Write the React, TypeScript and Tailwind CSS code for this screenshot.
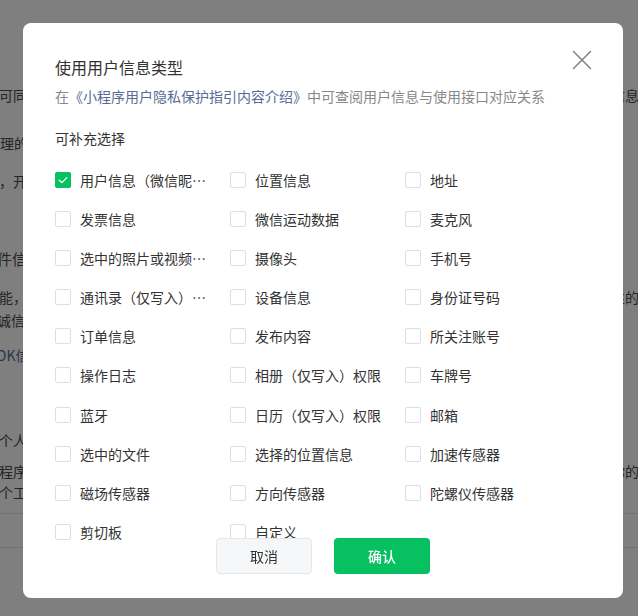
import React from "react";

const items: { label: string; checked?: boolean }[] = [
  { label: "用户信息（微信昵称、头像）", checked: true },
  { label: "位置信息" },
  { label: "地址" },
  { label: "发票信息" },
  { label: "微信运动数据" },
  { label: "麦克风" },
  { label: "选中的照片或视频信息" },
  { label: "摄像头" },
  { label: "手机号" },
  { label: "通讯录（仅写入）权限" },
  { label: "设备信息" },
  { label: "身份证号码" },
  { label: "订单信息" },
  { label: "发布内容" },
  { label: "所关注账号" },
  { label: "操作日志" },
  { label: "相册（仅写入）权限" },
  { label: "车牌号" },
  { label: "蓝牙" },
  { label: "日历（仅写入）权限" },
  { label: "邮箱" },
  { label: "选中的文件" },
  { label: "选择的位置信息" },
  { label: "加速传感器" },
  { label: "磁场传感器" },
  { label: "方向传感器" },
  { label: "陀螺仪传感器" },
  { label: "剪切板" },
  { label: "自定义" },
];

function Checkbox({ checked }: { checked?: boolean }) {
  if (checked) {
    return (
      <span className="flex h-4 w-4 shrink-0 items-center justify-center rounded-[2px] bg-[#07c160]">
        <svg width="12" height="12" viewBox="0 0 12 12" fill="none">
          <path d="M2.2 6.2 L4.9 8.6 L9.8 3.6" stroke="#fff" strokeWidth="1.3" strokeLinecap="round" strokeLinejoin="round" />
        </svg>
      </span>
    );
  }
  return <span className="block h-4 w-4 shrink-0 rounded-[2px] border border-[#dedede] bg-white" />;
}

export default function App() {
  const font = { fontFamily: '"Noto Sans CJK SC", "Noto Sans", sans-serif' };
  return (
    <div className="relative h-[616px] w-[638px] overflow-hidden bg-white text-[14px] text-[#4a4a4a]" style={font}>
      {/* background page */}
      <div className="flex flex-col">
        <div className="mt-[84px] flex h-[22px] justify-between leading-[22px]">
          <span className="-ml-[1px]">可同意相关条款</span>
          <span className="-mr-[1px]">用户信息</span>
        </div>
        <div className="mt-[26px] flex h-[22px] leading-[22px]">
          <span>理的规则</span>
        </div>
        <div className="mt-[16px] flex h-[22px] leading-[22px]">
          <span className="-ml-[1px]">，开发者</span>
        </div>
        <div className="mt-[56px] flex h-[22px] text-[15px] leading-[22px]">
          <span className="-ml-[3px]">件信息</span>
        </div>
        <div className="mt-[16px] flex h-[22px] justify-between leading-[22px]">
          <span className="-ml-[1px]">能，</span>
          <span className="-mr-[1px]">性的</span>
        </div>
        <div className="mt-[1px] flex h-[22px] leading-[22px]">
          <span className="-ml-[3px]">诚信</span>
        </div>
        <div className="mt-[13px] flex h-[22px] leading-[22px] text-[#576b95]">
          <span className="-ml-[4px]">OK信息</span>
        </div>
        <div className="mt-[63px] flex h-[22px] leading-[22px]">
          <span className="-ml-[1px]">个人信息</span>
        </div>
        <div className="mt-[10px] flex h-[21px] justify-between leading-[21px]">
          <span className="-ml-[1px]">程序</span>
          <span className="-mr-[1px]">你的</span>
        </div>
        <div className="flex h-[21px] leading-[21px]">
          <span className="-ml-[1px]">个工作日</span>
        </div>
        <div className="mt-[10px] h-px w-full bg-[#e2e2e2]" />
        <div className="mt-[33px] h-px w-full bg-[#e2e2e2]" />
      </div>

      {/* overlay */}
      <div className="fixed inset-0 flex items-start justify-start bg-black/50 pl-[23px] pt-[23px]">
        <div className="relative h-[575px] w-[600px] rounded-[8px] bg-white px-8 pt-8">
          <button className="absolute right-[31px] top-[27px] flex h-5 w-5 items-center justify-center">
            <svg width="20" height="20" viewBox="0 0 20 20" fill="none">
              <path d="M1.5 1.5 L18.5 18.5 M18.5 1.5 L1.5 18.5" stroke="#808080" strokeWidth="1.5" strokeLinecap="round" />
            </svg>
          </button>
          <div className="h-6 text-[16px] leading-6 text-[#333]">使用用户信息类型</div>
          <div className="mt-[6px] h-[22px] leading-[22px] text-[#888]">
            在<span className="text-[#576b95]">《小程序用户隐私保护指引内容介绍》</span>中可查阅用户信息与使用接口对应关系
          </div>
          <div className="mt-[20px] h-[22px] leading-[22px] text-[#333]">可补充选择</div>
          <div className="mt-[20px] grid grid-cols-[175px_175px_175px] gap-y-[17.1px]">
            {items.map((it) => (
              <div key={it.label} className="flex h-[22px] items-center">
                <Checkbox checked={it.checked} />
                <span className="ml-[9px] max-w-[128px] overflow-hidden text-ellipsis whitespace-nowrap leading-[22px] text-[#333]">
                  {it.label}
                </span>
              </div>
            ))}
          </div>
          <div className="absolute bottom-[24px] left-0 right-0 flex justify-center gap-[22px]">
            <button className="h-9 w-24 rounded-[4px] border border-[#e6e6e6] bg-[#f6f7f8] text-[14px] text-[#333]">取消</button>
            <button className="h-9 w-24 rounded-[4px] bg-[#07c160] text-[14px] font-medium text-white">确认</button>
          </div>
        </div>
      </div>
    </div>
  );
}
